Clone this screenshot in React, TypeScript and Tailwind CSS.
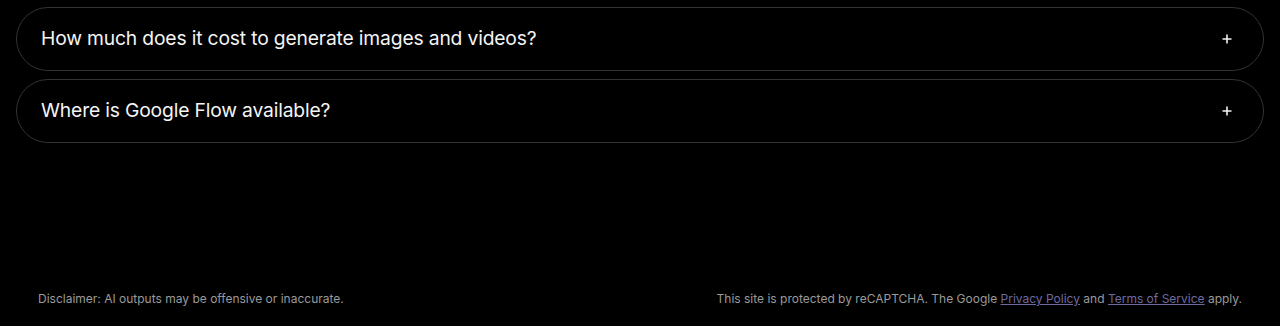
import { useState } from "react";

const questions = [
    "How much does it cost to generate images and videos?",
    "Where is Google Flow available?",
];

function PlusIcon() {
    return (
        <svg width="10" height="10" viewBox="0 0 10 10" fill="none">
            <path d="M5 0.5v9M0.5 5h9" stroke="#f2f2f2" strokeWidth="1.6" />
        </svg>
    );
}

export default function App() {
    const [open, setOpen] = useState<number | null>(null);

    return (
        <div
            className="min-h-screen bg-black flex flex-col justify-between"
            style={{ fontFamily: "Inter, 'Open Sans', sans-serif" }}
        >
            {/* FAQ items */}
            <div className="flex flex-col gap-[8px] px-4 pt-[7px]">
                {questions.map((q, i) => (
                    <button
                        key={q}
                        onClick={() => setOpen(open === i ? null : i)}
                        className="flex items-center justify-between h-[64px] w-full rounded-full border border-[#333333] pl-6 pr-[31px] text-left"
                    >
                        <span className="text-[19.3px] leading-[24px] pb-[3px] text-[#f4f4f4] tracking-[-0.17px]">{q}</span>
                        <PlusIcon />
                    </button>
                ))}
            </div>

            {/* Footer */}
            <div className="flex items-center justify-between px-[38px] pb-[19px] text-[12px] leading-[16px] text-[#9a9a9a]">
                <span>Disclaimer: AI outputs may be offensive or inaccurate.</span>
                <span>
                    This site is protected by reCAPTCHA. The Google{" "}
                    <a href="#" className="underline text-[#6e6aa0]">Privacy Policy</a> and{" "}
                    <a href="#" className="underline text-[#6e6aa0]">Terms of Service</a> apply.
                </span>
            </div>
        </div>
    );
}
